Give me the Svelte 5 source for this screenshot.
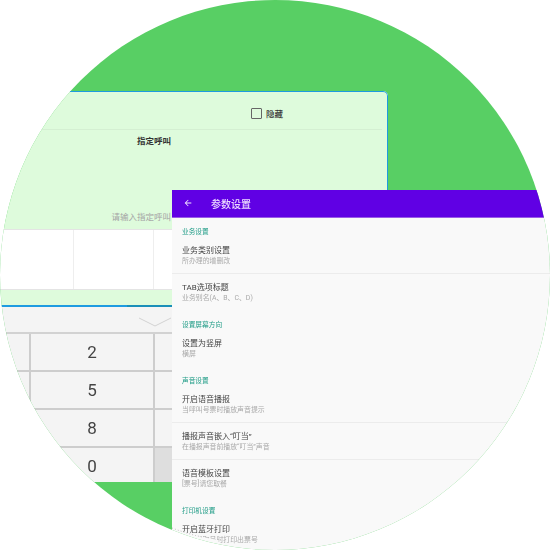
<script>
  const sections = [
    {
      title: "业务设置",
      items: [
        { name: "业务类别设置", desc: "所办理的增删改" },
        { name: "TAB选项标题", desc: "业务别名(A、B、C、D)" },
      ],
    },
    { title: "设置屏幕方向", items: [{ name: "设置为竖屏", desc: "横屏" }] },
    {
      title: "声音设置",
      items: [
        { name: "开启语音播报", desc: "当呼叫号票时播放声音提示" },
        { name: "播报声音嵌入“叮当”", desc: "在播报声音前播放“叮当”声音" },
        { name: "语音模板设置", desc: "[票号]请您取餐" },
      ],
    },
    {
      title: "打印机设置",
      items: [{ name: "开启蓝牙打印", desc: "开启后取号时打印出票号" }],
    },
  ];

  const keys = [
    ["", "2", ""],
    ["", "5", ""],
    ["", "8", ""],
    ["", "0", ""],
  ];
</script>

<div class="circle">
  <div class="window back">
    <div class="panel">
      <div class="panel-top">
        <span class="checkbox"></span>
        <span class="hide-label">隐藏</span>
      </div>
      <div class="field">
        <div class="field-label">指定呼叫</div>
        <div class="field-hint">请输入指定呼叫</div>
      </div>
    </div>
    <div class="cells">
      <div class="cell first"></div>
      <div class="cell second"></div>
      <div class="cell"></div>
    </div>
    <div class="strip"></div>
    <div class="rule"></div>
    <div class="keyboard">
      <div class="chevron">
        <svg width="34" height="10" viewBox="0 0 34 10">
          <path d="M1 1 L17 9 L33 1" fill="none" stroke="#d2d2d2" stroke-width="1" />
        </svg>
      </div>
      {#each keys as row, r}
        <div class="key-row">
          {#each row as key, c}
            <div class="key" class:dark={r === 3 && c === 2}>{key}</div>
          {/each}
        </div>
      {/each}
    </div>
  </div>

  <div class="window settings">
    <header>
      <svg width="10" height="10" viewBox="0 0 24 24">
        <path d="M20 11H7.8l5.6-5.6L12 4l-8 8 8 8 1.4-1.4L7.8 13H20z" fill="#f3e6ff" />
      </svg>
      <h1>参数设置</h1>
    </header>
    {#each sections as section}
      <div class="section-title">{section.title}</div>
      {#each section.items as item, i}
        <div class="item" class:last={i === section.items.length - 1}>
          <div class="item-name">{item.name}</div>
          <div class="item-desc">{item.desc}</div>
        </div>
      {/each}
    {/each}
    <svg class="corner" width="50" height="26" viewBox="0 0 50 26">
      <path d="M0 4 Q22 12 46 16 L50 26 L0 26 Z" fill="#fafafa" />
      <path d="M0 4 Q16 10 30 13" fill="none" stroke="#999" stroke-width="0.6" stroke-dasharray="1 2" />
    </svg>
  </div>
</div>

<style>
  :global(body) {
    margin: 0;
    background: #fff;
  }
  .circle {
    position: relative;
    width: 550px;
    height: 550px;
    border-radius: 50%;
    overflow: hidden;
    background: #58cf64;
    font-family: "Roboto", "Noto Sans CJK SC", sans-serif;
  }
  .window {
    position: absolute;
    filter: blur(0.4px);
  }
  .back {
    left: -20px;
    top: 91px;
    width: 408px;
    height: 391px;
    display: flex;
    flex-direction: column;
    background: #f4f4f4;
    border-top-right-radius: 5px;
    overflow: hidden;
  }
  .panel {
    flex: none;
    height: 138px;
    box-sizing: border-box;
    background: #defbdc;
    border-top: 1px solid #1e9be0;
    border-right: 1px solid #1e9be0;
    border-top-right-radius: 5px;
    display: flex;
    flex-direction: column;
  }
  .panel-top {
    flex: none;
    height: 38px;
    box-sizing: border-box;
    margin-right: 5px;
    border-bottom: 1px solid #d4efd2;
    display: flex;
    align-items: center;
    padding-left: 271px;
    padding-top: 5px;
    gap: 5px;
  }
  .checkbox {
    width: 9px;
    height: 9px;
    border: 1px solid #666;
    border-radius: 1px;
  }
  .hide-label {
    font-size: 8.5px;
    font-weight: 500;
    color: #333;
    margin-left: -1px;
  }
  .field {
    flex: 1;
    width: 191px;
    display: flex;
    flex-direction: column;
    justify-content: space-between;
    align-items: flex-end;
    padding: 6px 0 6px;
    box-sizing: border-box;
  }
  .field-label {
    font-size: 8.5px;
    font-weight: 700;
    line-height: 11px;
    color: #333;
  }
  .field-hint {
    font-size: 8.5px;
    line-height: 11px;
    color: #a5a5a5;
  }
  .cells {
    flex: none;
    height: 61px;
    box-sizing: border-box;
    display: flex;
    background: #fff;
    border-top: 1px solid #e4e4e4;
    border-bottom: 1px solid #e4e4e4;
  }
  .cell {
    flex: 1;
  }
  .cell.first {
    flex: none;
    width: 93px;
    border-right: 1px solid #eeeeee;
  }
  .cell.second {
    flex: none;
    width: 79px;
    border-right: 1px solid #eeeeee;
  }
  .strip {
    flex: none;
    height: 15px;
    background: #defbdc;
  }
  .rule {
    flex: none;
    height: 2px;
    background: linear-gradient(90deg, #1e9be0 147px, #1a8fb8 147px);
  }
  .keyboard {
    flex: none;
    background: #f4f4f4;
  }
  .chevron {
    height: 27px;
    display: flex;
    align-items: center;
    padding-left: 158px;
    padding-top: 4px;
    box-sizing: border-box;
    border-bottom: 2px solid #d2d2d2;
  }
  .key-row {
    height: 38px;
    box-sizing: border-box;
    display: flex;
    border-bottom: 2px solid #cdcdcd;
  }
  .key {
    box-sizing: border-box;
    display: flex;
    align-items: center;
    justify-content: center;
    font-size: 17px;
    color: #444;
    border-right: 2px solid #cdcdcd;
    flex: 1;
  }
  .key:first-child {
    flex: none;
    width: 51px;
  }
  .key:nth-child(2) {
    flex: none;
    width: 124px;
  }
  .key.dark {
    background: #dedede;
  }
  .settings {
    left: 172px;
    top: 190px;
    width: 400px;
    height: 380px;
    background: #f9f9f9;
    display: flex;
    flex-direction: column;
  }
  header {
    height: 28px;
    flex: none;
    background: #6000e4;
    display: flex;
    align-items: center;
    padding: 0 0 1px 11px;
    box-sizing: border-box;
    border-bottom: 1px solid #9a5ce6;
  }
  h1 {
    margin: 0 0 0 18px;
    font-size: 10px;
    font-weight: 500;
    color: #ecdcff;
  }
  .section-title {
    height: 19px;
    flex: none;
    box-sizing: border-box;
    padding: 10px 0 0 10px;
    font-size: 6.7px;
    line-height: 9px;
    color: #1f9c86;
  }
  .item {
    height: 37px;
    flex: none;
    box-sizing: border-box;
    padding: 8px 0 0 10px;
    border-bottom: 1px solid #ececec;
  }
  .item.last {
    border-bottom: none;
  }
  .item-name {
    font-size: 8px;
    line-height: 11px;
    color: #444;
  }
  .item-desc {
    font-size: 6.9px;
    line-height: 11px;
    color: #aaa;
  }
  .corner {
    position: absolute;
    left: 0;
    top: 334px;
  }
</style>
